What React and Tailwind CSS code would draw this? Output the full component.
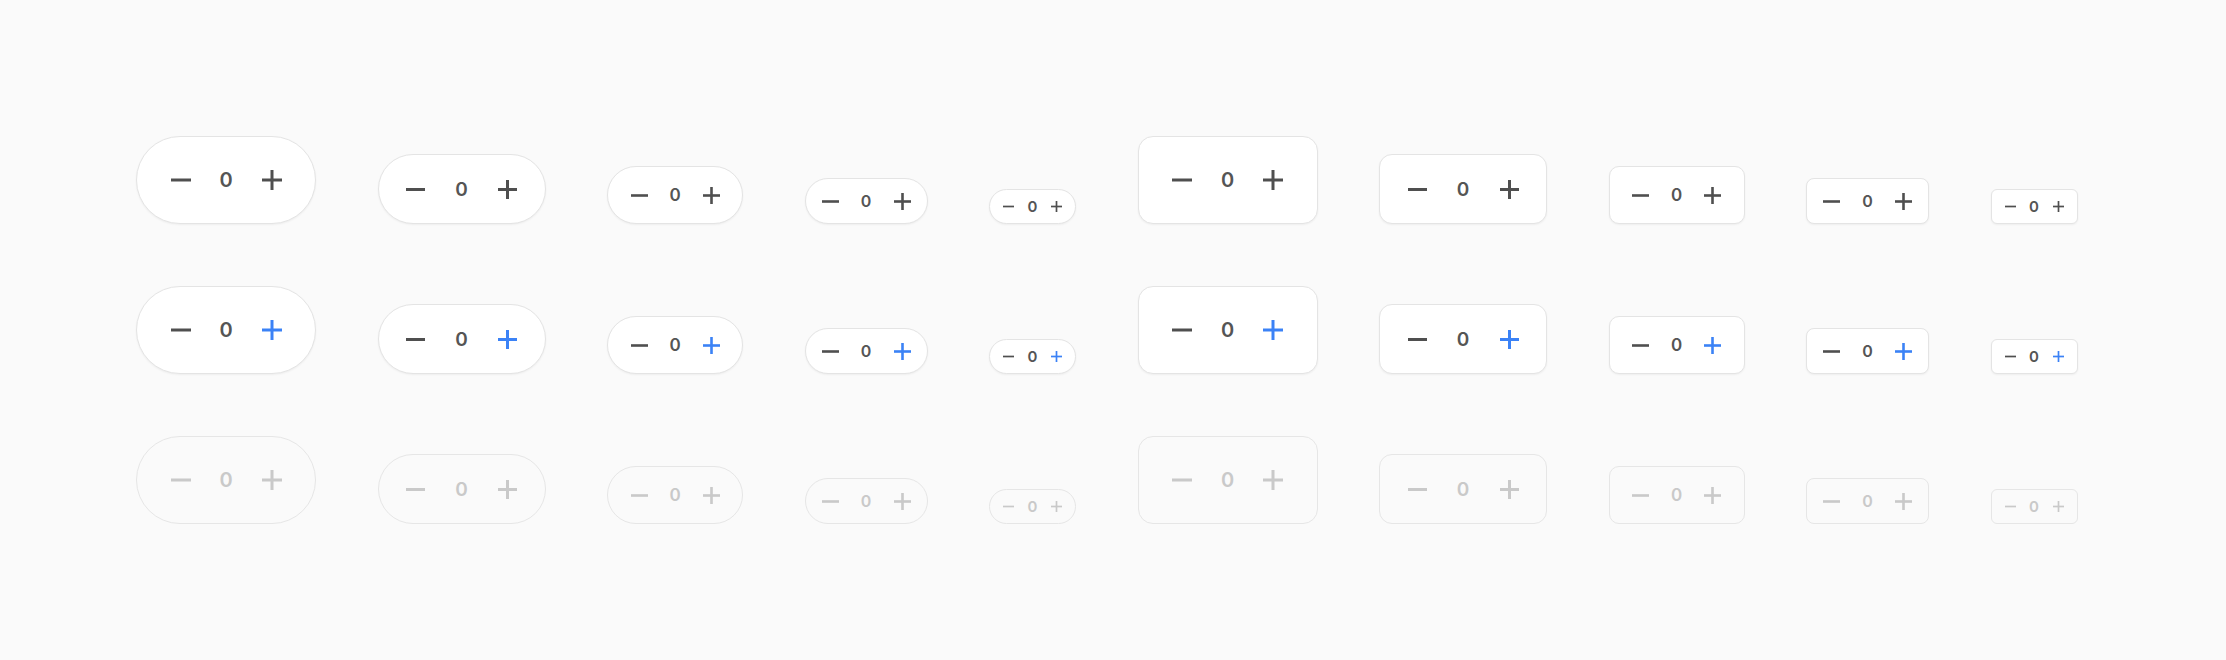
import React from 'react';

const sizes = [
  { box: 'w-[180px] h-[88px] text-[20px]', btn: 'w-[40px]', val: 'w-[51px]', icon: 20, stroke: 3, rect: 'rounded-[15px]' },
  { box: 'w-[168px] h-[70px] text-[19px]', btn: 'w-[40px]', val: 'w-[52px]', icon: 19, stroke: 3, rect: 'rounded-[13px]' },
  { box: 'w-[136px] h-[58px] text-[17px]', btn: 'w-[32px]', val: 'w-[40px]', icon: 17, stroke: 2.6, rect: 'rounded-[10px]' },
  { box: 'w-[123px] h-[46px] text-[16px]', btn: 'w-[30px]', val: 'w-[42px]', icon: 17, stroke: 2.6, rect: 'rounded-[8px]' },
  { box: 'w-[87px] h-[35px] text-[15px]', btn: 'w-[20px]', val: 'w-[28px]', icon: 11, stroke: 1.7, rect: 'rounded-[6px]' },
];

const Minus = ({ size, stroke }) => (
  <svg width={size} height={size} viewBox={`0 0 ${size} ${size}`} fill="none">
    <line x1="0" y1={size / 2} x2={size} y2={size / 2} stroke="currentColor" strokeWidth={stroke} />
  </svg>
);

const Plus = ({ size, stroke }) => (
  <svg width={size} height={size} viewBox={`0 0 ${size} ${size}`} fill="none">
    <line x1="0" y1={size / 2} x2={size} y2={size / 2} stroke="currentColor" strokeWidth={stroke} />
    <line x1={size / 2} y1="0" x2={size / 2} y2={size} stroke="currentColor" strokeWidth={stroke} />
  </svg>
);

const Stepper = ({ size, shape, variant }) => {
  const disabled = variant === 'disabled';
  const frame = disabled
    ? 'bg-transparent border-[#e6e6e6]'
    : 'bg-white border-[#e4e4e4] shadow-[0_1px_2px_rgba(0,0,0,0.05)]';
  const iconColor = disabled ? 'text-[#c9c9c9]' : 'text-[#4f4f4f]';
  const plusColor = disabled ? 'text-[#c9c9c9]' : variant === 'primary' ? 'text-[#3b82f6]' : 'text-[#4f4f4f]';
  const valColor = disabled ? 'text-[#c9c9c9]' : 'text-[#555555]';

  return (
    <div className={`flex shrink-0 items-center justify-center border ${frame} ${size.box} ${shape === 'pill' ? 'rounded-full' : size.rect}`}>
      <button className={`flex items-center justify-center ${size.btn} ${iconColor}`}>
        <Minus size={size.icon} stroke={size.stroke} />
      </button>
      <span className={`text-center font-semibold leading-none ${size.val} ${valColor}`}>0</span>
      <button className={`flex items-center justify-center ${size.btn} ${plusColor}`}>
        <Plus size={size.icon} stroke={size.stroke} />
      </button>
    </div>
  );
};

const App = () => {
  const rows = ['default', 'primary', 'disabled'];
  return (
    <div
      className="min-h-screen bg-[#fafafa] p-[136px] flex flex-col gap-[62px]"
      style={{ fontFamily: 'Inter, "Noto Sans", sans-serif' }}
    >
      {rows.map((variant) => (
        <div key={variant} className="flex items-end gap-[61.5px]">
          {['pill', 'rect'].map((shape) =>
            sizes.map((size, i) => (
              <Stepper key={shape + i} size={size} shape={shape} variant={variant} />
            ))
          )}
        </div>
      ))}
    </div>
  );
};

export default App;
